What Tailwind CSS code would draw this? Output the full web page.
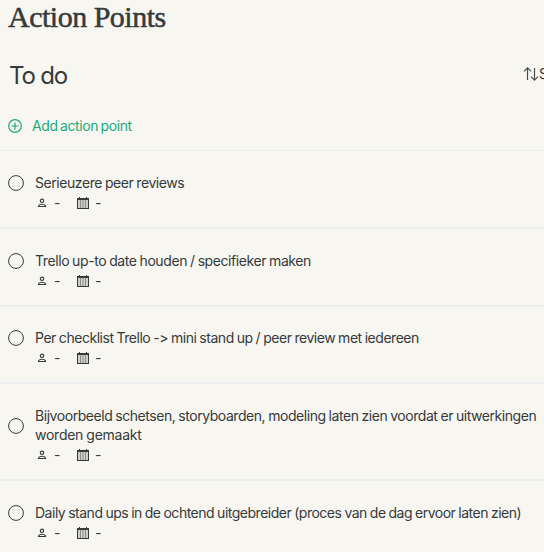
<!DOCTYPE html>
<html lang="nl">
<head>
<meta charset="utf-8">
<title>Action Points</title>
<script src="https://cdn.jsdelivr.net/npm/@tailwindcss/browser@4"></script>
</head>
<body class="w-[544px] h-[552px] overflow-hidden bg-[#f8f6f1] text-[#353a3b] font-['Inter',sans-serif] text-[14px]">
<svg class="hidden">
  <symbol id="person" viewBox="0 0 10 10"><circle cx="5" cy="2.800" r="1.700" fill="none" stroke="#353a3b" stroke-width="1.100"/><path d="M1.500 8.500V7.800C2.200 6.600 3.400 6.200 5 6.200s2.800.4 3.500 1.600v.7z" fill="none" stroke="#353a3b" stroke-width="1.100"/></symbol>
  <symbol id="calendar" viewBox="0 0 12 12"><path d="M0 1h12v11H0z" fill="#353a3b"/><path d="M2 0h1v1H2zM9 0h1v1H9z" fill="#353a3b"/><path d="M1 3h10v8H1z" fill="#cfcfcb"/><path d="M3.500 3v8M6 3v8M8.500 3v8" stroke="#7b7e7c" stroke-width=".8"/></symbol>
</svg>
<h1 class="h-[58px] pl-2 font-['Liberation_Serif',serif] text-[30px] leading-[33px] tracking-[-0.5px] whitespace-nowrap"><span class="[-webkit-text-stroke:0.5px_#353a3b]">Action Points</span></h1>
<div class="flex h-[36px] justify-between pl-[9px]">
  <h2 class="text-[24px] leading-[36px] tracking-[-1.2px]">To do</h2>
  <div class="flex w-[21px] shrink-0 overflow-hidden whitespace-nowrap leading-[32px]">
    <svg class="mt-[9px] h-[14px] w-[16px] shrink-0" viewBox="0 0 16 14" fill="none" stroke="#4b4f4f" stroke-width="1.200"><path d="M4.500 13V1M1 4.400l3.500-3.500 3.500 3.500M11.500 1v12M8 9.600l3.500 3.500 3.500-3.500"/></svg><span>Sort</span>
  </div>
</div>
<button class="flex h-[57px] w-full items-center border-b border-[#ecefec] pl-2 pt-[6px] text-[#1caa7c]">
  <svg class="mt-px h-[14px] w-[14px]" viewBox="0 0 14 14" fill="none" stroke="#1caa7c" stroke-width="1.200"><circle cx="7" cy="7" r="6.300"/><path d="M7 3.500v7M3.500 7h7"/></svg>
  <span class="ml-[10px] tracking-[-0.42px] [word-spacing:-1px]">Add action point</span>
</button>
<ul class="leading-[19px] whitespace-nowrap [word-spacing:-0.5px]">
  <li class="flex h-[78px] border-b-2 border-[#ebeeec] pl-2 pt-[22px]">
    <svg class="mt-[2px] h-4 w-4 shrink-0" viewBox="0 0 16 16"><circle cx="8" cy="8" r="7.400" fill="none" stroke="#353a3b"/></svg>
    <div class="ml-[11px]"><p class="tracking-[-0.44px]">Serieuzere peer reviews</p>
      <div class="flex items-center pl-[2px] pt-px"><svg class="h-[10px] w-[10px]"><use href="#person"/></svg><span class="ml-[7px] w-[23px]">-</span><svg class="h-3 w-3"><use href="#calendar"/></svg><span class="ml-[6px]">-</span></div></div>
  </li>
  <li class="flex h-[78px] border-b-2 border-[#ebeeec] pl-2 pt-[22px]">
    <svg class="mt-[2px] h-4 w-4 shrink-0" viewBox="0 0 16 16"><circle cx="8" cy="8" r="7.400" fill="none" stroke="#353a3b"/></svg>
    <div class="ml-[11px]"><p class="tracking-[-0.42px]">Trello up-to date houden / specifieker maken</p>
      <div class="flex items-center pl-[2px] pt-px"><svg class="h-[10px] w-[10px]"><use href="#person"/></svg><span class="ml-[7px] w-[23px]">-</span><svg class="h-3 w-3"><use href="#calendar"/></svg><span class="ml-[6px]">-</span></div></div>
  </li>
  <li class="flex h-[77px] border-b-2 border-[#ebeeec] pl-2 pt-[21px]">
    <svg class="mt-[2px] h-4 w-4 shrink-0" viewBox="0 0 16 16"><circle cx="8" cy="8" r="7.400" fill="none" stroke="#353a3b"/></svg>
    <div class="ml-[11px]"><p class="tracking-[-0.47px] [font-feature-settings:'calt'_0]">Per checklist Trello -&gt; mini stand up / peer review met iedereen</p>
      <div class="flex items-center pl-[2px] pt-px"><svg class="h-[10px] w-[10px]"><use href="#person"/></svg><span class="ml-[7px] w-[23px]">-</span><svg class="h-3 w-3"><use href="#calendar"/></svg><span class="ml-[6px]">-</span></div></div>
  </li>
  <li class="flex h-[97px] border-b-2 border-[#ebeeec] pl-2 pt-[22px]">
    <svg class="mt-[12px] h-4 w-4 shrink-0" viewBox="0 0 16 16"><circle cx="8" cy="8" r="7.400" fill="none" stroke="#353a3b"/></svg>
    <div class="ml-[11px]"><p class="tracking-[-0.45px]">Bijvoorbeeld schetsen, storyboarden, modeling laten zien voordat er uitwerkingen<br><span class="tracking-[-0.25px]">worden gemaakt</span></p>
      <div class="flex items-center pl-[2px] pt-px"><svg class="h-[10px] w-[10px]"><use href="#person"/></svg><span class="ml-[7px] w-[23px]">-</span><svg class="h-3 w-3"><use href="#calendar"/></svg><span class="ml-[6px]">-</span></div></div>
  </li>
  <li class="flex h-[78px] pl-2 pt-[22px]">
    <svg class="mt-[2px] h-4 w-4 shrink-0" viewBox="0 0 16 16"><circle cx="8" cy="8" r="7.400" fill="none" stroke="#353a3b"/></svg>
    <div class="ml-[11px]"><p class="tracking-[-0.49px]">Daily stand ups in de ochtend uitgebreider (proces van de dag ervoor laten zien)</p>
      <div class="flex items-center pl-[2px] pt-px"><svg class="h-[10px] w-[10px]"><use href="#person"/></svg><span class="ml-[7px] w-[23px]">-</span><svg class="h-3 w-3"><use href="#calendar"/></svg><span class="ml-[6px]">-</span></div></div>
  </li>
</ul>
</body>
</html>
